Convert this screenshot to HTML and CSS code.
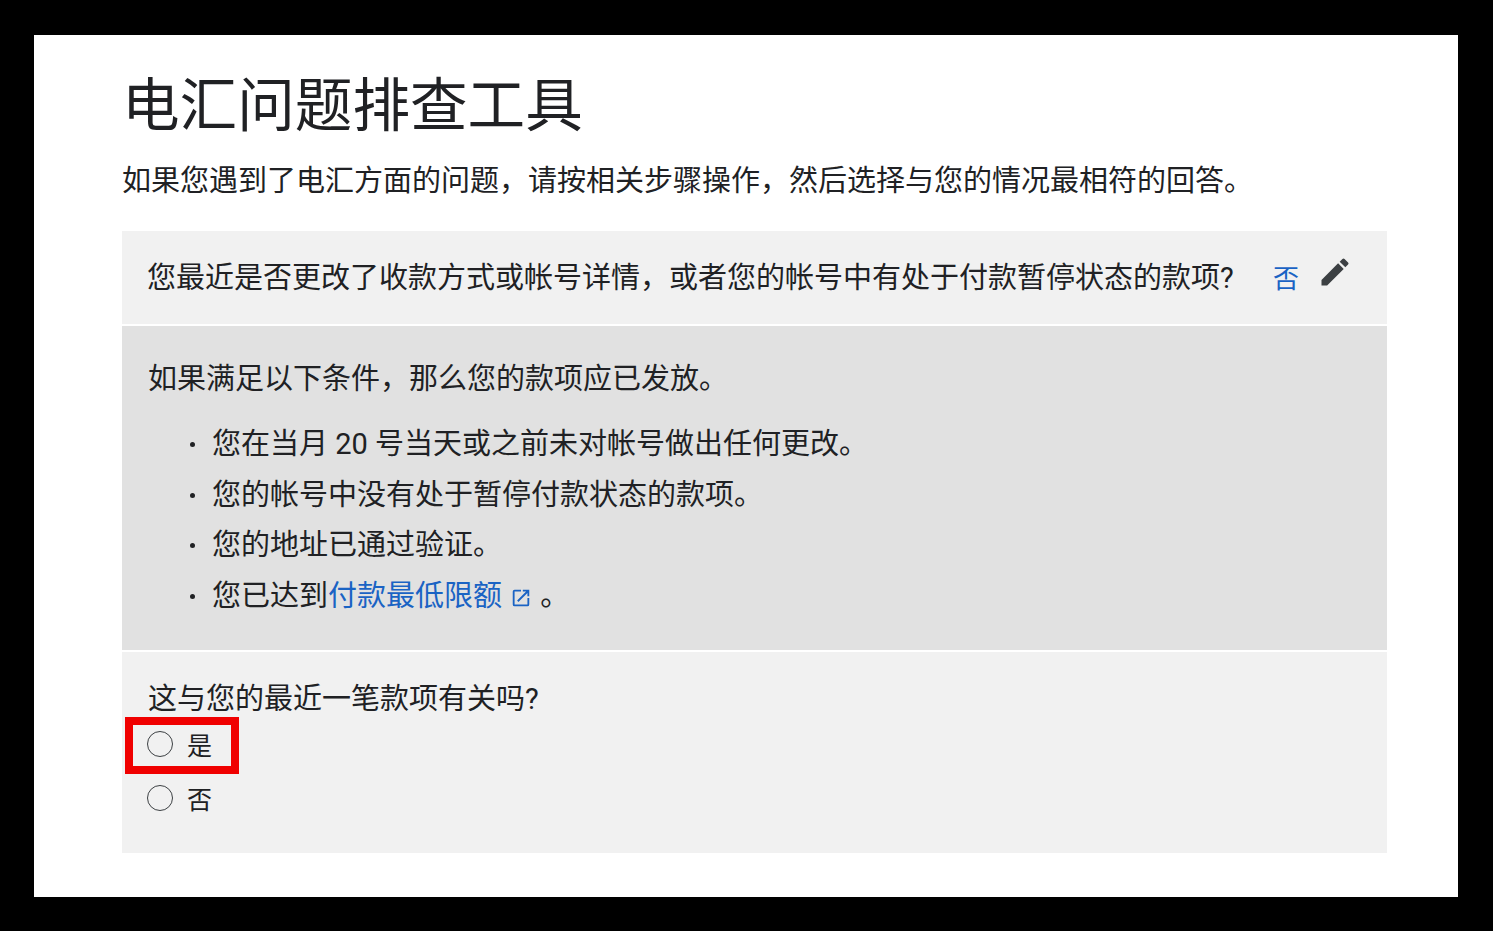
FILE: index.html
```html
<!DOCTYPE html>
<html lang="zh-CN">
<head>
	<meta charset="utf-8">
	<title>电汇问题排查工具</title>
	<link rel="stylesheet" href="styles.css">
</head>
<body>
	<main class="sheet">
		<h1>电汇问题排查工具</h1>
		<p class="intro">如果您遇到了电汇方面的问题，请按相关步骤操作，然后选择与您的情况最相符的回答。</p>

		<section class="step answered">
			<span class="question">您最近是否更改了收款方式或帐号详情，或者您的帐号中有处于付款暂停状态的款项?</span>
			<a class="answer" href="#">否</a>
			<svg class="edit" viewBox="0 0 24 24" width="36" height="36"><path d="M3 17.25V21h3.75L17.81 9.94l-3.75-3.75L3 17.25zM20.71 7.04a1 1 0 0 0 0-1.41l-2.34-2.34a1 1 0 0 0-1.41 0l-1.83 1.83 3.75 3.75 1.83-1.83z"/></svg>
		</section>

		<section class="step result">
			<p>如果满足以下条件，那么您的款项应已发放。</p>
			<ul>
				<li>您在当月 20 号当天或之前未对帐号做出任何更改。</li>
				<li>您的帐号中没有处于暂停付款状态的款项。</li>
				<li>您的地址已通过验证。</li>
				<li>您已达到<a href="#">付款最低限额<svg class="external" viewBox="0 0 24 24" width="22" height="22"><path d="M19 19H5V5h7V3H5a2 2 0 0 0-2 2v14a2 2 0 0 0 2 2h14a2 2 0 0 0 2-2v-7h-2v7zM14 3v2h3.59l-9.83 9.83 1.41 1.41L19 6.41V10h2V3h-7z"/></svg></a> 。</li>
			</ul>
		</section>

		<section class="step ask">
			<p>这与您的最近一笔款项有关吗?</p>
			<label class="option highlighted"><span class="radio"></span>是</label>
			<label class="option"><span class="radio"></span>否</label>
		</section>
	</main>
</body>
</html>
```

FILE: styles.css
```css
/* general */
html, body {
	margin: 0;
	height: 100%;
	background: #000;
}
body {
	padding: 35px 35px 34px 34px;
	box-sizing: border-box;
	font-family: Roboto, "Noto Sans CJK SC", sans-serif;
	color: #202124;
}
.sheet {
	height: 862px;
	background: #fff;
	padding: 0 71px 0 88px;
	overflow: hidden;
}
a {
	color: #1a63c4;
	text-decoration: none;
}
p {
	margin: 0;
}
/* heading */
h1 {
	margin: 0;
	padding-top: 35px;
	font-size: 57.6px;
	line-height: 74px;
	font-weight: 400;
}
.intro {
	margin-top: 17px;
	font-size: 29px;
	line-height: 40px;
}
/* steps */
.step {
	font-size: 29px;
	padding: 0 26px;
	box-sizing: border-box;
}
.answered {
	margin-top: 30px;
	height: 93px;
	background: #f1f1f1;
	display: flex;
	align-items: flex-start;
	padding: 27px 26px 0 25px;
	line-height: 40px;
}
.question {
	width: 1126px;
	white-space: nowrap;
}
.answer {
	font-size: 26px;
	line-height: 40px;
	margin-top: 1px;
}
.edit {
	fill: #3c4043;
	margin: -4px 0 0 18px;
}
.result {
	margin-top: 2px;
	height: 324px;
	background: #e1e1e1;
	padding-top: 33px;
	line-height: 40px;
}
.result ul {
	margin: 25px 0 0;
	padding-left: 64px;
	list-style: none;
}
.result li {
	margin-bottom: 10.6px;
}
.result li::before {
	content: "";
	display: inline-block;
	width: 5px;
	height: 5px;
	border-radius: 50%;
	background: #202124;
	margin: 0 17px 0 -22px;
	vertical-align: 7px;
}
.external {
	fill: #1a63c4;
	vertical-align: -3px;
	margin: 0 1px 0 8px;
}
.ask {
	margin-top: 2px;
	height: 201px;
	background: #f1f1f1;
	padding-top: 27px;
	line-height: 40px;
}
.ask p {
	margin-bottom: 1px;
}
/* radio buttons */
.option {
	display: flex;
	align-items: center;
	font-size: 25px;
	height: 54px;
	position: relative;
}
.radio {
	width: 26px;
	height: 26px;
	border: 1px solid #3c4043;
	border-radius: 50%;
	box-sizing: border-box;
	margin: -6px 14px 0 -1px;
}
.highlighted::after {
	content: "";
	position: absolute;
	left: -23px;
	top: -3px;
	width: 114px;
	height: 57px;
	border: 8px solid #f00000;
	box-sizing: border-box;
}
```
